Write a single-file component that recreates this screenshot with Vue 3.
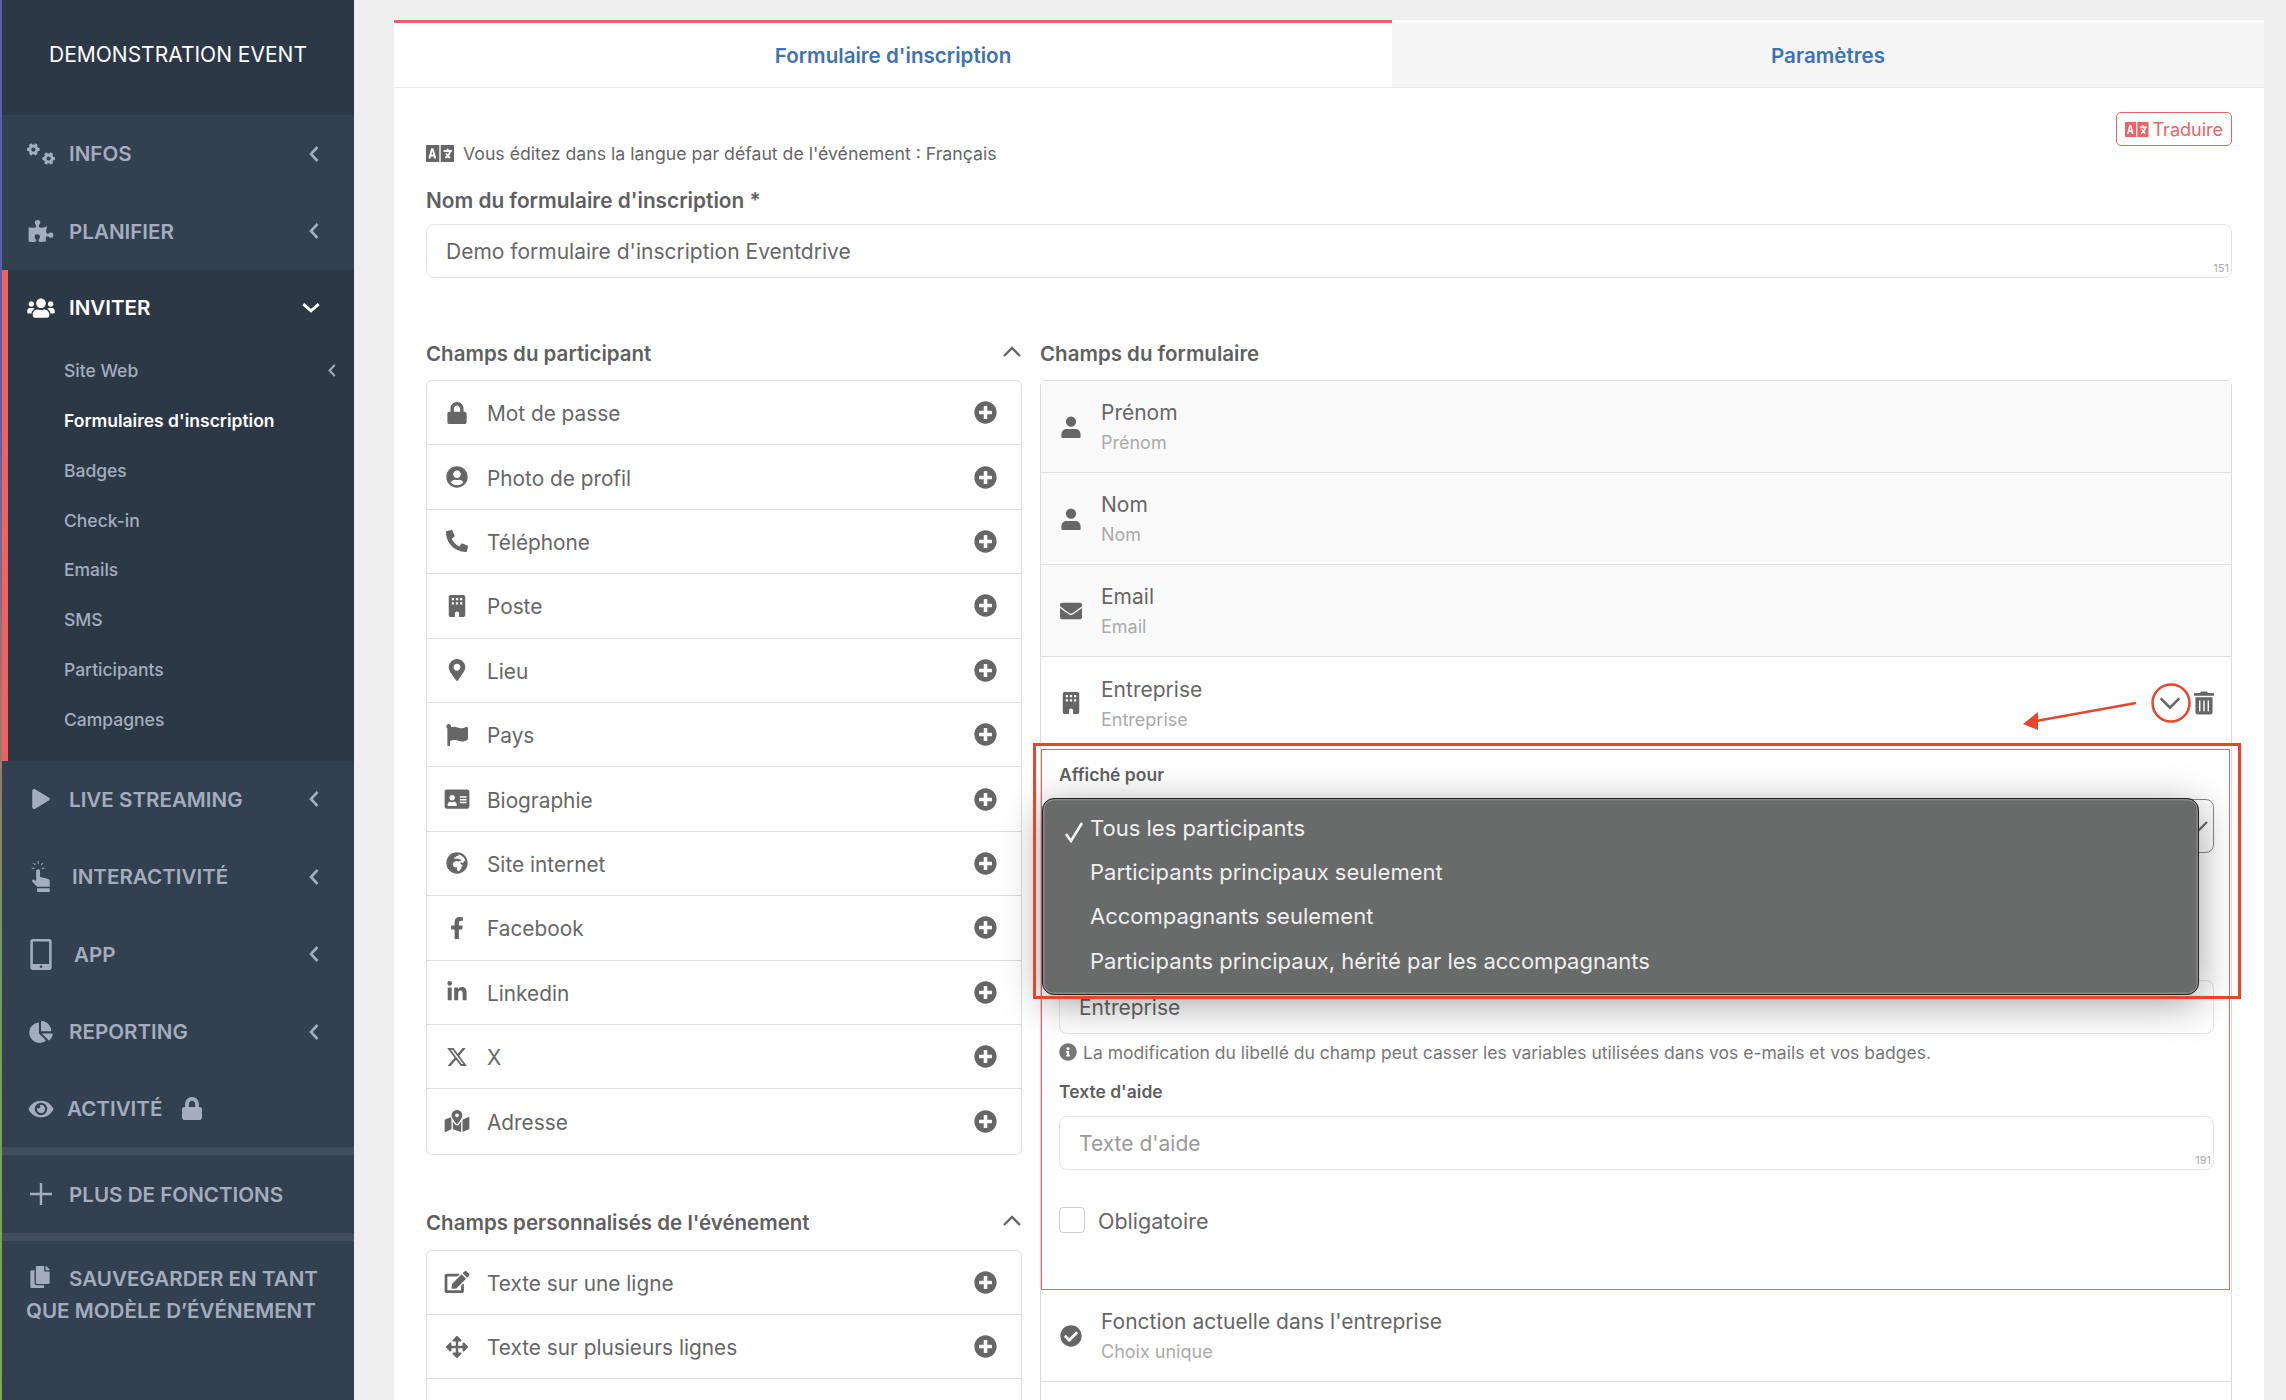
<script setup>
const gear = (x, y) => `M${x} ${y}l-8.2 14.3c-3 5.3-9.4 7.5-15.1 5.4-11.8-4.4-22.6-10.7-32.1-18.6-4.6-3.8-5.8-10.5-2.8-15.7l8.2-14.3c-6.9-8-12.3-17.3-15.9-27.4h-16.5c-6 0-11.2-4.3-12.2-10.3-2-12-2.1-24.6 0-37.1 1-6 6.2-10.4 12.2-10.4h16.5c3.6-10.1 9-19.4 15.9-27.4l-8.2-14.3c-3-5.2-1.9-11.9 2.8-15.7 9.5-7.9 20.4-14.2 32.1-18.6 5.7-2.1 12.1.1 15.1 5.4l8.2 14.3c10.5-1.9 21.2-1.9 31.7 0L${x + 39.9} ${y - 184.7}c3-5.3 9.4-7.5 15.1-5.4 11.8 4.4 22.6 10.7 32.1 18.6 4.6 3.8 5.8 10.5 2.8 15.7l-8.2 14.3c6.9 8 12.3 17.3 15.9 27.4h16.5c6 0 11.2 4.3 12.2 10.3 2 12 2.1 24.6 0 37.1-1 6-6.2 10.4-12.2 10.4h-16.5c-3.6 10.1-9 19.4-15.9 27.4l8.2 14.3c3 5.2 1.9 11.9-2.8 15.7-9.5 7.9-20.4 14.2-32.1 18.6-5.7 2.1-12.1-.1-15.1-5.4l-8.2-14.3c-10.4 1.9-21.2 1.9-31.7 0zm-10.5-58.8c38.5 29.6 82.4-14.3 52.8-52.8-38.5-29.7-82.4 14.3-52.8 52.8z`
const langPath = 'M152.1 236.2c-3.5-12.1-7.8-33.2-7.8-33.2h-.5s-4.3 21.1-7.8 33.2l-11.1 37.5H163zM616 96H336v320h280c13.3 0 24-10.7 24-24V120c0-13.3-10.7-24-24-24zm-24 120c0 6.6-5.4 12-12 12h-11.4c-6.9 23.6-21.7 47.4-42.7 69.9 8.4 6.4 17.1 12.5 26.1 18 5.5 3.4 7.3 10.5 4.1 16.2l-7.9 13.9c-3.4 5.9-10.9 7.8-16.7 4.3-12.6-7.8-24.5-16.1-35.4-24.9-10.9 8.7-22.7 17.1-35.4 24.9-5.8 3.5-13.3 1.6-16.7-4.3l-7.9-13.9c-3.2-5.6-1.4-12.8 4.2-16.2 9.3-5.7 18-11.7 26.1-18-7.9-8.4-14.9-17-21-25.7-4-5.7-2.2-13.6 3.7-17.1l6.5-3.9 7.3-4.3c5.4-3.2 12.4-1.7 16 3.4 5 7 10.8 14 17.4 20.9 13.5-14.2 23.8-28.9 30-43.2H412c-6.6 0-12-5.4-12-12v-16c0-6.6 5.4-12 12-12h64v-16c0-6.6 5.4-12 12-12h16c6.6 0 12 5.4 12 12v16h64c6.6 0 12 5.4 12 12zM0 120v272c0 13.3 10.7 24 24 24h280V96H24c-13.3 0-24 10.7-24 24zm58.9 216.1L116.4 167c1.7-4.9 6.2-8.1 11.4-8.1h32.5c5.1 0 9.7 3.3 11.4 8.1l57.5 169.1c2.6 7.8-3.1 15.9-11.4 15.9h-22.9a12 12 0 0 1-11.5-8.6l-9.4-31.9h-60.2l-9.1 31.8c-1.5 5.1-6.2 8.7-11.5 8.7H70.3c-8.2 0-14-8.1-11.4-15.9z'
const P = {
  lock: ['0 0 448 512', 'M400 224h-24v-72C376 68.2 307.8 0 224 0S72 68.2 72 152v72H48c-26.5 0-48 21.5-48 48v192c0 26.5 21.5 48 48 48h352c26.5 0 48-21.5 48-48V272c0-26.5-21.5-48-48-48zm-104 0H152v-72c0-39.7 32.3-72 72-72s72 32.3 72 72v72z'],
  userCircle: ['0 0 496 512', 'M248 8C111 8 0 119 0 256s111 248 248 248 248-111 248-248S385 8 248 8zm0 96c48.6 0 88 39.4 88 88s-39.4 88-88 88-88-39.4-88-88 39.4-88 88-88zm0 344c-58.7 0-111.3-26.6-146.5-68.2 18.8-35.4 55.6-59.8 98.5-59.8 2.4 0 4.8.4 7.1 1.1 13 4.2 26.6 6.9 40.9 6.9 14.3 0 28-2.7 40.9-6.9 2.3-.7 4.7-1.1 7.1-1.1 42.9 0 79.7 24.4 98.5 59.8C359.3 421.4 306.7 448 248 448z'],
  phone: ['0 0 512 512', 'M18.6 24.6l104-24c11.3-2.6 22.9 3.3 27.5 13.9l48 112c4.2 9.8 1.4 21.3-6.9 28l-60.6 49.6c36 76.7 98.9 140.5 177.2 177.2l49.6-60.6c6.8-8.3 18.2-11.1 28-6.9l112 48c10.7 4.7 16.6 16.3 14 27.6l-24 104C484.9 504.2 475.3 512 464 512 207.9 512 0 304.5 0 48c0-11.2 7.7-20.9 18.6-23.4z'],
  building: ['0 0 384 512', 'M48 0h288c26.5 0 48 21.5 48 48v416c0 26.5-21.5 48-48 48h-96v-80c0-26.5-21.5-48-48-48s-48 21.5-48 48v80H48c-26.5 0-48-21.5-48-48V48C0 21.5 21.5 0 48 0zM70 72h52v52H70zM166 72h52v52h-52zM262 72h52v52h-52zM70 168h52v52H70zM166 168h52v52h-52zM262 168h52v52h-52z'],
  marker: ['0 0 384 512', 'M172.268 501.67C26.97 291.031 0 260.74 0 192 0 85.961 85.961 0 192 0s192 85.961 192 192c0 68.74-26.97 99.031-172.268 309.67-9.535 13.774-29.93 13.773-39.464 0zM192 272c44.183 0 80-35.817 80-80s-35.817-80-80-80-80 35.817-80 80 35.817 80 80 80z'],
  flag: ['0 0 512 512', 'M349.565 98.783C295.978 98.783 251.721 64 184.348 64c-24.955 0-47.309 4.384-68.045 12.013a55.947 55.947 0 0 0 3.586-23.562C118.117 24.015 94.806 1.206 66.338.048 34.345-1.254 8 24.296 8 56c0 19.026 9.497 35.825 24 45.945V488c0 13.255 10.745 24 24 24h16c13.255 0 24-10.745 24-24v-94.4c28.311-12.064 63.582-22.122 114.435-22.122 53.588 0 97.844 34.783 165.217 34.783 48.169 0 86.667-16.294 122.505-40.858C506.84 359.452 512 349.571 512 339.045v-243.1c0-23.393-24.269-38.87-45.485-29.016-34.338 15.948-76.454 31.854-116.95 31.854z'],
  idCard: ['0 0 576 512', 'M48 32h480c26.5 0 48 21.5 48 48v352c0 26.5-21.5 48-48 48H48c-26.5 0-48-21.5-48-48V80c0-26.5 21.5-48 48-48zM352 200c0-4.4 3.6-8 8-8h144c4.4 0 8 3.6 8 8v16c0 4.4-3.6 8-8 8H360c-4.4 0-8-3.6-8-8v-16zm0 64c0-4.4 3.6-8 8-8h144c4.4 0 8 3.6 8 8v16c0 4.4-3.6 8-8 8H360c-4.4 0-8-3.6-8-8v-16zm0 64c0-4.4 3.6-8 8-8h144c4.4 0 8 3.6 8 8v16c0 4.4-3.6 8-8 8H360c-4.4 0-8-3.6-8-8v-16zM176 160c35.3 0 64 28.7 64 64s-28.7 64-64 64-64-28.7-64-64 28.7-64 64-64zM67.1 396.2C75.5 340.5 99.6 322 128 322h8.2c12.3 5.1 25.7 8 39.8 8s27.6-2.9 39.8-8h8.2c28.4 0 52.5 18.5 60.9 74.2 1.6 9.9-5.2 19.8-15.6 19.8H82.7c-10.4 0-17.2-10-15.6-19.8z'],
  globe: ['0 0 496 512', 'M248 8C111.03 8 0 119.03 0 256s111.03 248 248 248 248-111.03 248-248S384.97 8 248 8zm160 215.5v6.93c0 5.87-3.32 11.24-8.57 13.86l-15.39 7.7a15.485 15.485 0 0 1-15.53-.97l-18.21-12.14a15.52 15.52 0 0 0-13.5-1.81l-2.65.88c-9.7 3.23-13.66 14.79-7.99 23.3l13.24 19.86c2.87 4.31 7.71 6.9 12.89 6.9h8.21c8.56 0 15.5 6.94 15.5 15.5v11.34c0 3.35-1.09 6.62-3.1 9.3l-18.74 24.98c-1.42 1.9-2.39 4.1-2.83 6.43l-4.3 22.83c-.62 3.29-2.29 6.29-4.76 8.56a159.608 159.608 0 0 0-25 29.16l-13.03 19.55a27.756 27.756 0 0 1-23.09 12.36c-10.51 0-20.12-5.94-24.82-15.34a78.902 78.902 0 0 1-8.33-35.29V367.5c0-8.56-6.94-15.5-15.5-15.5h-25.88c-14.49 0-28.38-5.76-38.63-16a54.659 54.659 0 0 1-16-38.63v-14.06c0-17.19 8.1-33.38 21.85-43.7l27.58-20.69a54.663 54.663 0 0 1 32.78-10.93h.89c8.48 0 16.85 1.97 24.43 5.77l14.72 7.36c3.68 1.84 7.93 2.14 11.83.84l47.31-15.77c6.33-2.11 10.6-8.03 10.6-14.7 0-8.56-6.94-15.5-15.5-15.5h-10.09c-4.11 0-8.05-1.63-10.96-4.54l-6.92-6.92a15.493 15.493 0 0 0-10.96-4.54H199.5c-8.56 0-15.5-6.94-15.5-15.5v-4.4c0-7.11 4.84-13.31 11.74-15.04l14.45-3.61c3.74-.94 7-3.23 9.14-6.44l8.08-12.11c2.87-4.31 7.71-6.9 12.89-6.9h24.21c8.56 0 15.5-6.94 15.5-15.5v-21.7C359.23 71.63 422.86 131.02 441.93 208H423.5c-8.56 0-15.5 6.94-15.5 15.5z'],
  fb: ['0 0 320 512', 'M279.14 288l14.22-92.66h-88.91v-60.13c0-25.35 12.42-50.06 52.24-50.06h40.42V6.26S260.43 0 225.36 0c-73.22 0-121.08 44.38-121.08 124.72v70.62H22.89V288h81.39v224h100.17V288z'],
  li: ['0 0 448 512', 'M100.28 448H7.4V148.9h92.88zM53.79 108.1C24.09 108.1 0 83.5 0 53.8a53.79 53.79 0 0 1 107.58 0c0 29.7-24.1 54.3-53.79 54.3zM447.9 448h-92.68V302.4c0-34.7-.7-79.2-48.29-79.2-48.29 0-55.69 37.7-55.69 76.7V448h-92.78V148.9h89.08v40.8h1.3c12.4-23.5 42.69-48.3 87.88-48.3 94 0 111.28 61.9 111.28 142.3V448z'],
  x: ['0 0 512 512', 'M389.2 48h70.6L305.6 224.2 487 464H345L233.7 318.6 106.5 464H35.8L200.7 275.5 26.8 48H172.4L272.9 180.9 389.2 48zM364.4 421.8h39.1L151.1 88h-42L364.4 421.8z'],
  map: ['0 0 576 512', 'M288 0c-69.59 0-126 56.41-126 126 0 56.26 82.35 158.8 113.9 196.02 6.39 7.54 17.82 7.54 24.2 0C331.65 284.8 414 182.26 414 126 414 56.41 357.59 0 288 0zm0 168c-23.2 0-42-18.8-42-42s18.8-42 42-42 42 18.8 42 42-18.8 42-42 42zM20.12 215.95A32.006 32.006 0 0 0 0 245.66v250.32c0 11.32 11.43 19.06 21.94 14.86L160 448V214.92c-8.84-15.98-16.07-31.54-21.25-46.42L20.12 215.95zM288 359.67c-14.07 0-27.38-6.18-36.51-16.96-19.66-23.2-40.57-49.62-59.49-76.72V448l192 64V266c-18.92 27.09-39.82 53.52-59.49 76.72-9.13 10.77-22.44 16.95-36.51 16.95zm266.06-198.51L416 224v288l139.88-55.95A31.996 31.996 0 0 0 576 426.34V176.02c0-11.32-11.43-19.06-21.94-14.86z'],
  edit: ['0 0 576 512', 'M402.6 83.2l90.2 90.2c3.8 3.8 3.8 10 0 13.8L274.4 405.6l-92.8 10.3c-12.4 1.4-22.9-9.1-21.5-21.5l10.3-92.8L388.8 83.2c3.8-3.8 10-3.8 13.8 0zm162-22.9l-48.8-48.8c-15.2-15.2-39.9-15.2-55.2 0l-35.4 35.4c-3.8 3.8-3.8 10 0 13.8l90.2 90.2c3.8 3.8 10 3.8 13.8 0l35.4-35.4c15.2-15.3 15.2-40 0-55.2zM384 346.2V448H64V128h229.8c3.2 0 6.2-1.3 8.5-3.5l40-40c7.6-7.6 2.2-20.5-8.5-20.5H48C21.5 64 0 85.5 0 112v352c0 26.5 21.5 48 48 48h352c26.5 0 48-21.5 48-48V306.2c0-10.7-12.9-16-20.5-8.5l-40 40c-2.2 2.3-3.5 5.3-3.5 8.5z'],
  arrows: ['0 0 512 512', 'M352.201 425.775l-79.196 79.196c-9.373 9.373-24.568 9.373-33.941 0l-79.196-79.196c-15.119-15.119-4.411-40.971 16.971-40.97h51.162L228 284H127.196v51.162c0 21.382-25.851 32.09-40.971 16.971L7.029 272.937c-9.373-9.373-9.373-24.569 0-33.941L86.225 159.8c15.119-15.119 40.971-4.411 40.971 16.971V228H228V127.196h-51.23c-21.382 0-32.09-25.851-16.971-40.971l79.196-79.196c9.373-9.373 24.568-9.373 33.941 0l79.196 79.196c15.119 15.119 4.411 40.971-16.971 40.971h-51.162V228h100.804v-51.162c0-21.382 25.851-32.09 40.97-16.971l79.196 79.196c9.373 9.373 9.373 24.569 0 33.941L425.773 352.2c-15.119 15.119-40.971 4.411-40.97-16.971V284H284v100.804h51.23c21.382 0 32.09 25.851 16.971 40.971z'],
  plus: ['0 0 512 512', 'M256 8C119 8 8 119 8 256s111 248 248 248 248-111 248-248S393 8 256 8zm144 276c0 6.6-5.4 12-12 12h-92v92c0 6.6-5.4 12-12 12h-56c-6.6 0-12-5.4-12-12v-92h-92c-6.6 0-12-5.4-12-12v-56c0-6.6 5.4-12 12-12h92v-92c0-6.6 5.4-12 12-12h56c6.6 0 12 5.4 12 12v92h92c6.6 0 12 5.4 12 12v56z'],
  user: ['0 0 448 512', 'M224 10a120 120 0 1 1 0 240a120 120 0 1 1 0-240zM110 300h228c60 0 110 60 110 130v60c0 12-10 22-22 22H22c-12 0-22-10-22-22v-60c0-70 50-130 110-130z'],
  envelope: ['0 0 512 512', 'M502.3 190.8c3.9-3.1 9.7-.2 9.7 4.7V400c0 26.5-21.5 48-48 48H48c-26.5 0-48-21.5-48-48V195.6c0-5 5.7-7.8 9.7-4.7 22.4 17.4 52.1 39.5 154.1 113.6 21.1 15.4 56.7 47.8 92.2 47.6 35.7.3 72-32.8 92.3-47.6 102-74.1 131.6-96.3 154-113.7zM256 320c23.2.4 56.6-29.2 73.4-41.4 132.7-96.3 142.8-104.7 173.4-128.7 5.8-4.5 9.2-11.5 9.2-18.9v-19c0-26.5-21.5-48-48-48H48C21.5 64 0 85.5 0 112v19c0 7.4 3.4 14.3 9.2 18.9 30.6 23.9 40.7 32.4 173.4 128.7 16.8 12.2 50.2 41.8 73.4 41.4z'],
  check: ['0 0 512 512', 'M504 256c0 136.967-111.033 248-248 248S8 392.967 8 256 119.033 8 256 8s248 111.033 248 248zM227.314 387.314l184-184c6.248-6.248 6.248-16.379 0-22.627l-22.627-22.627c-6.248-6.249-16.379-6.249-22.628 0L216 308.118l-70.059-70.059c-6.248-6.248-16.379-6.248-22.628 0l-22.627 22.627c-6.248 6.248-6.248 16.379 0 22.627l104 104c6.249 6.249 16.379 6.249 22.628.001z'],
  info: ['0 0 512 512', 'M256 8C119.043 8 8 119.083 8 256c0 136.997 111.043 248 248 248s248-111.003 248-248C504 119.083 392.957 8 256 8zm0 110c23.196 0 42 18.804 42 42s-18.804 42-42 42-42-18.804-42-42 18.804-42 42-42zm56 254c0 6.627-5.373 12-12 12h-88c-6.627 0-12-5.373-12-12v-24c0-6.627 5.373-12 12-12h12v-64h-12c-6.627 0-12-5.373-12-12v-24c0-6.627 5.373-12 12-12h64c6.627 0 12 5.373 12 12v100h12c6.627 0 12 5.373 12 12v24z'],
  trash: ['0 0 448 512', 'M32 464a48 48 0 0 0 48 48h288a48 48 0 0 0 48-48V128H32zm272-256a16 16 0 0 1 32 0v224a16 16 0 0 1-32 0zm-96 0a16 16 0 0 1 32 0v224a16 16 0 0 1-32 0zm-96 0a16 16 0 0 1 32 0v224a16 16 0 0 1-32 0zM432 32H312l-9.4-18.7A24 24 0 0 0 281.1 0H166.8a23.72 23.72 0 0 0-21.4 13.3L136 32H16A16 16 0 0 0 0 48v32a16 16 0 0 0 16 16h416a16 16 0 0 0 16-16V48a16 16 0 0 0-16-16z'],
  language: ['0 96 640 320', langPath],
  cogs: ['0 0 494 372', gear(96.1, 191) + gear(366.1, 351)],
  puzzle: ['0 0 576 512', 'M519.442 288.651c-41.519 0-59.5 31.593-82.058 31.593C377.409 320.244 432 144 432 144s-196.288 80-196.288-3.297c0-35.827 36.288-46.25 36.288-85.985C272 19.216 243.885 0 210.539 0c-34.654 0-66.366 18.891-66.366 56.346 0 41.364 31.711 59.277 31.711 81.75C175.885 207.719 0 166.758 0 166.758v333.237s178.635 41.047 178.635-28.662c0-22.473-40-40.107-40-81.471 0-37.456 29.25-56.346 63.577-56.346 33.673 0 61.788 19.216 61.788 54.717 0 39.735-36.288 50.158-36.288 85.985 0 60.803 129.675 25.73 181.23 25.73 0 0-34.725-120.101 25.827-120.101 35.962 0 46.423 36.152 86.308 36.152C556.712 416 576 387.99 576 354.443c0-34.199-18.962-65.792-56.558-65.792z'],
  users: ['0 0 640 512', 'M96 224c35.3 0 64-28.7 64-64s-28.7-64-64-64-64 28.7-64 64 28.7 64 64 64zm448 0c35.3 0 64-28.7 64-64s-28.7-64-64-64-64 28.7-64 64 28.7 64 64 64zm32 32h-64c-17.6 0-33.5 7.1-45.1 18.6 40.3 22.1 68.9 62 75.1 109.4h66c17.7 0 32-14.3 32-32v-32c0-35.3-28.7-64-64-64zm-256 0c61.9 0 112-50.1 112-112S381.9 32 320 32 208 82.1 208 144s50.1 112 112 112zm76.8 32h-8.3c-20.8 10-43.9 16-68.5 16s-47.6-6-68.5-16h-8.3C179.6 288 128 339.6 128 403.2V432c0 26.5 21.5 48 48 48h288c26.5 0 48-21.5 48-48v-28.8c0-63.6-51.6-115.2-115.2-115.2zm-223.7-13.4C161.5 263.1 145.6 256 128 256H64c-35.3 0-64 28.7-64 64v32c0 17.7 14.3 32 32 32h65.9c6.3-47.4 34.9-87.3 75.2-109.4z'],
  play: ['0 0 448 512', 'M424.4 214.7L72.4 6.6C43.8-10.3 0 6.1 0 47.9V464c0 37.5 40.7 60.1 72.4 41.3l352-208c31.4-18.5 31.5-64.1 0-82.6z'],
  hand: ['0 0 20 32', 'M6.6 0h.9v3h-.9zM1.8 2.4l.7-.7 1.9 1.9-.7.7zM11.6 1.7l.7.7-1.9 1.9-.7-.7zM.5 7h2.8v.9H.5zM10.8 7h2.8v.9h-2.8zM5 10.5c0-1.3.8-2.1 2-2.1s2 .8 2 2.1v6l7.2 1.6c1.7.4 2.8 1.4 2.8 3.1v5.3H6L1.2 21.4c-1.1-1.2.5-2.9 1.9-1.9L5 21zM6 28h13v4H6z'],
  tablet: ['0 0 352 512', 'M40 0h272c22 0 40 18 40 40v432c0 22-18 40-40 40H40c-22 0-40-18-40-40V40C0 18 18 0 40 0zM176 478c-12 0-22-9-22-20s10-20 22-20 22 9 22 20-10 20-22 20zM310 412V40H42v372z'],
  pie: ['0 0 544 512', 'M527.79 288H290.5l158.03 158.03c6.04 6.04 15.98 6.53 22.19.68 38.7-36.46 65.32-85.61 73.13-140.86 1.34-9.46-6.51-17.85-16.06-17.85zm-15.83-64.8C503.72 103.74 408.26 8.28 288.8.04 279.68-.59 272 7.1 272 16.24V240h223.77c9.14 0 16.82-7.68 16.19-16.8zM224 288V50.71c0-9.55-8.39-17.4-17.84-16.06C86.99 51.49-4.1 155.6.14 280.37 4.5 408.51 114.83 513.59 243.03 511.98c50.4-.63 96.97-16.87 135.26-44.03 7.9-5.6 8.42-17.23 1.57-24.08L224 288z'],
  eye: ['0 0 576 512', 'M572.52 241.4C518.29 135.59 410.93 64 288 64S57.68 135.64 3.48 241.41a32.35 32.35 0 0 0 0 29.19C57.71 376.41 165.07 448 288 448s230.32-71.64 284.52-177.41a32.35 32.35 0 0 0 0-29.19zM288 400a144 144 0 1 1 144-144 143.93 143.93 0 0 1-144 144zm0-240a95.31 95.31 0 0 0-25.31 3.79 47.85 47.85 0 0 1-66.9 66.9A95.78 95.78 0 1 0 288 160z'],
  copy: ['0 0 448 512', 'M320 448v40c0 13.255-10.745 24-24 24H24c-13.255 0-24-10.745-24-24V120c0-13.255 10.745-24 24-24h72v296c0 30.879 25.121 56 56 56h168zm0-344V0H152c-13.255 0-24 10.745-24 24v368c0 13.255 10.745 24 24 24h272c13.255 0 24-10.745 24-24V128H344c-13.2 0-24-10.8-24-24zm120.971-31.029L375.029 7.029A24 24 0 0 0 358.059 0H352v96h96v-6.059a24 24 0 0 0-7.029-16.97z'],
}

const navTop = [
  { label: 'INFOS', icon: 'cogs' },
  { label: 'PLANIFIER', icon: 'puzzle' },
]
const subItems = ['Site Web', "Formulaires d'inscription", 'Badges', 'Check-in', 'Emails', 'SMS', 'Participants', 'Campagnes']
const navBottom = [
  { label: 'LIVE STREAMING', icon: 'play', cls: 'small' },
  { label: 'INTERACTIVITÉ', icon: 'hand', cls: 'tall shift3' },
  { label: 'APP', icon: 'tablet', cls: 'tall shift5' },
  { label: 'REPORTING', icon: 'pie', cls: '' },
]
const participantFields = [
  ['Mot de passe', 'lock'], ['Photo de profil', 'userCircle'], ['Téléphone', 'phone'], ['Poste', 'building'],
  ['Lieu', 'marker'], ['Pays', 'flag'], ['Biographie', 'idCard'], ['Site internet', 'globe'],
  ['Facebook', 'fb'], ['Linkedin', 'li'], ['X', 'x'], ['Adresse', 'map'],
]
const customFields = [['Texte sur une ligne', 'edit'], ['Texte sur plusieurs lignes', 'arrows']]
const lockedFields = [['Prénom', 'Prénom', 'user'], ['Nom', 'Nom', 'user'], ['Email', 'Email', 'envelope']]
const options = ['Tous les participants', 'Participants principaux seulement', 'Accompagnants seulement', 'Participants principaux, hérité par les accompagnants']
</script>

<template>
  <div class="page">
    <aside class="sidebar">
      <div class="brand">DEMONSTRATION EVENT</div>
      <div v-for="n in navTop" :key="n.label" class="nav-item">
        <span class="nav-ico"><svg :viewBox="P[n.icon][0]"><path :d="P[n.icon][1]" fill-rule="evenodd" /></svg></span>
        <span class="nav-label">{{ n.label }}</span>
        <svg class="chev-left" viewBox="0 0 10 18"><path d="M8.5 2 2 9l6.5 7" /></svg>
      </div>

      <div class="active-group">
        <div class="nav-item active">
          <span class="nav-ico"><svg :viewBox="P.users[0]"><path :d="P.users[1]" /></svg></span>
          <span class="nav-label">INVITER</span>
          <svg class="chev-down" viewBox="0 0 18 10"><path d="M2 2l7 6 7-6" /></svg>
        </div>
        <div v-for="(s, i) in subItems" :key="s" class="sub-item" :class="{ current: i === 1 }">
          {{ s }}
          <svg v-if="i === 0" class="chev-left sub-chev" viewBox="0 0 10 18"><path d="M8.5 2 2 9l6.5 7" /></svg>
        </div>
      </div>

      <div v-for="n in navBottom" :key="n.label" class="nav-item" :class="n.cls">
        <span class="nav-ico"><svg :viewBox="P[n.icon][0]"><path :d="P[n.icon][1]" fill-rule="evenodd" /></svg></span>
        <span class="nav-label">{{ n.label }}</span>
        <svg class="chev-left" viewBox="0 0 10 18"><path d="M8.5 2 2 9l6.5 7" /></svg>
      </div>
      <div class="nav-item activity">
        <span class="nav-ico"><svg :viewBox="P.eye[0]"><path :d="P.eye[1]" /></svg></span>
        <span class="nav-label">ACTIVITÉ</span>
        <svg class="activity-lock" :viewBox="P.lock[0]"><path :d="P.lock[1]" /></svg>
      </div>
      <div class="nav-sep"></div>
      <div class="nav-item">
        <span class="nav-ico"><svg class="plus-sign" viewBox="0 0 18 18"><path d="M8 0h2v8h8v2h-8v8H8v-8H0V8h8z" /></svg></span>
        <span class="nav-label">PLUS DE FONCTIONS</span>
      </div>
      <div class="nav-sep"></div>
      <div class="save-tpl">
        <svg :viewBox="P.copy[0]"><path :d="P.copy[1]" /></svg>SAUVEGARDER EN TANT QUE MODÈLE D’ÉVÉNEMENT
      </div>
    </aside>

    <main class="main">
      <div class="tabs">
        <div class="tab tab-on">Formulaire d'inscription</div>
        <div class="tab tab-off">Paramètres</div>
      </div>

      <div class="content">
        <div class="lang-row">
          <div class="lang-note">
            <svg :viewBox="P.language[0]" preserveAspectRatio="none"><path :d="P.language[1]" /></svg>
            <span>Vous éditez dans la langue par défaut de l'événement : Français</span>
          </div>
          <button class="translate">
            <svg :viewBox="P.language[0]" preserveAspectRatio="none"><path :d="P.language[1]" /></svg>Traduire
          </button>
        </div>

        <div class="label-main">Nom du formulaire d'inscription *</div>
        <div class="input name-input">Demo formulaire d'inscription Eventdrive<span class="count">151</span></div>

        <div class="columns">
          <section class="col-left">
            <div class="col-title">Champs du participant
              <svg class="chev-up" viewBox="0 0 20 12"><path d="M2 10l8-8 8 8" /></svg>
            </div>
            <div class="list">
              <div v-for="f in participantFields" :key="f[0]" class="add-row">
                <span class="f-ico"><svg :viewBox="P[f[1]][0]"><path :d="P[f[1]][1]" fill-rule="evenodd" /></svg></span>
                <span class="f-name">{{ f[0] }}</span>
                <svg class="add" :viewBox="P.plus[0]"><path :d="P.plus[1]" /></svg>
              </div>
            </div>

            <div class="col-title second">Champs personnalisés de l'événement
              <svg class="chev-up" viewBox="0 0 20 12"><path d="M2 10l8-8 8 8" /></svg>
            </div>
            <div class="list">
              <div v-for="f in customFields" :key="f[0]" class="add-row">
                <span class="f-ico"><svg :viewBox="P[f[1]][0]"><path :d="P[f[1]][1]" /></svg></span>
                <span class="f-name">{{ f[0] }}</span>
                <svg class="add" :viewBox="P.plus[0]"><path :d="P.plus[1]" /></svg>
              </div>
              <div class="add-row"></div>
            </div>
          </section>

          <section class="col-right">
            <div class="col-title">Champs du formulaire</div>
            <div class="list form-list">
              <div v-for="f in lockedFields" :key="f[0]" class="form-row locked">
                <span class="f-ico"><svg :viewBox="P[f[2]][0]"><path :d="P[f[2]][1]" /></svg></span>
                <div class="f-text"><div class="f-name">{{ f[0] }}</div><div class="f-sub">{{ f[1] }}</div></div>
              </div>

              <div class="form-row open">
                <span class="f-ico"><svg :viewBox="P.building[0]"><path :d="P.building[1]" fill-rule="evenodd" /></svg></span>
                <div class="f-text"><div class="f-name">Entreprise</div><div class="f-sub">Entreprise</div></div>
                <div class="row-actions">
                  <svg class="act-chev" viewBox="0 0 20 12"><path d="M2 2l8 8 8-8" /></svg>
                  <svg class="act-trash" :viewBox="P.trash[0]"><path :d="P.trash[1]" /></svg>
                </div>
              </div>

              <div class="editor">
                <div class="label-small first">Affiché pour</div>
                <div class="select">
                  <svg viewBox="0 0 20 12"><path d="M2 2l8 8 8-8" /></svg>
                </div>
                <div class="input edit-input">Entreprise</div>
                <div class="hint">
                  <svg :viewBox="P.info[0]"><path :d="P.info[1]" /></svg>
                  La modification du libellé du champ peut casser les variables utilisées dans vos e-mails et vos badges.
                </div>
                <div class="label-small">Texte d'aide</div>
                <div class="input edit-input placeholder">Texte d'aide<span class="count">191</span></div>
                <div class="required"><span class="checkbox"></span><span class="req-text">Obligatoire</span></div>

                <div class="native-menu">
                  <div v-for="(o, i) in options" :key="o" class="opt">
                    <svg v-if="i === 0" class="tick" viewBox="0 0 20 24"><path d="M2 14l5 7L18 3" /></svg>
                    {{ o }}
                  </div>
                </div>
              </div>

              <div class="form-row">
                <span class="f-ico"><svg :viewBox="P.check[0]"><path :d="P.check[1]" /></svg></span>
                <div class="f-text"><div class="f-name">Fonction actuelle dans l'entreprise</div><div class="f-sub">Choix unique</div></div>
              </div>
              <div class="form-row"></div>
            </div>
          </section>
        </div>
      </div>
    </main>

    <div class="mark-box"></div>
    <svg class="mark-arrow" viewBox="0 0 2286 1400">
      <circle cx="2171" cy="703" r="18.5" />
      <line x1="2136" y1="703" x2="2036" y2="721" />
      <polygon points="2023,724 2038,712 2038,730" />
    </svg>
  </div>
</template>

<style>
body { margin: 0; background: #eeeeee; }
</style>

<style scoped>
.page {
  position: relative;
  display: flex;
  width: 2286px;
  height: 1400px;
  overflow: hidden;
  background: #eeeeee;
  font-family: Inter, "Noto Sans", sans-serif;
  color: #666;
}
/* sidebar */
.sidebar {
  flex: none;
  width: 352px;
  height: 1400px;
  border-left: 2px solid;
  border-image: linear-gradient(180deg, #5a60a8 0%, #5a60a8 30%, #a8706a 50%, #6f9d62 70%, #7aad55 100%) 1;
  background: #334050;
  font-family: Inter, "Noto Sans", sans-serif;
  color: #a3adbd;
}
.brand {
  height: 115px;
  background: #2d3847;
  color: #fff;
  font-size: 21px;
  font-weight: 400;
  line-height: 110px;
  text-align: center;
}
.nav-item {
  position: relative;
  display: flex;
  align-items: center;
  height: 77.4px;
  padding-left: 24px;
  font-size: 20.6px;
  font-weight: 600;
}
.nav-ico {
  display: flex;
  justify-content: center;
  align-items: center;
  flex: none;
  width: 30px;
  margin-right: 13px;
}
.nav-ico svg { width: 28px; height: 22px; fill: #a3adbd; }
.tall .nav-ico svg { height: 31px; }
.small .nav-ico svg { height: 20px; }
.shift3 .nav-label { margin-left: 3px; }
.shift5 .nav-label { margin-left: 5px; }
.chev-left {
  position: absolute;
  right: 35px;
  width: 10px;
  height: 18px;
  fill: none;
  stroke: #a3adbd;
  stroke-width: 2.6;
}
.active-group {
  height: 491px;
  background: #2d3847;
  border-left: 6px solid #ec6363;
  box-sizing: border-box;
}
.active-group .nav-item { height: 76px; padding-left: 18px; color: #fff; }
.active-group .nav-ico svg { fill: #fff; }
.chev-down {
  position: absolute;
  right: 33px;
  width: 20px;
  height: 11px;
  fill: none;
  stroke: #fff;
  stroke-width: 2.6;
}
.sub-item {
  position: relative;
  display: flex;
  align-items: center;
  height: 49.8px;
  padding-left: 56px;
  font-size: 17.5px;
  font-weight: 500;
  color: #a3adbd;
}
.sub-item.current { color: #fff; font-weight: 600; }
.sub-chev { right: 18px; width: 8px; height: 15px; }
.activity .nav-ico { margin-right: 11px; }
.activity { height: 77px; }
.activity-lock { width: 20px; height: 23px; margin-left: 20px; fill: #a3adbd; }
.nav-sep { height: 8px; background: #424e5e; }
.save-tpl {
  padding: 22px 0 0 24px;
  font-size: 20.6px;
  font-weight: 600;
  line-height: 32px;
}
.save-tpl svg { width: 20px; height: 22px; margin: 0 19px 0 4px; fill: #a3adbd; vertical-align: -2px; }

/* main */
.main {
  flex: none;
  width: 1870px;
  height: 1380px;
  margin: 20px 0 0 40px;
  background: #fff;
}
.tabs { display: flex; height: 68px; font-size: 20.6px; font-weight: 600; color: #3f72af; }
.tab { display: flex; align-items: center; justify-content: center; box-sizing: border-box; padding-top: 1px; }
.tab-on { width: 998px; border-top: 3px solid #ec6363; border-bottom: 1px solid #eaeaea; background: #fff; }
.tab-off { flex: 1; margin-top: 3px; background: #f5f5f5; border-bottom: 1px solid #e8e8e8; }
.content { padding: 24px 32px 0; }
.lang-row { display: flex; justify-content: space-between; height: 54px; }
.lang-note { display: flex; align-items: center; gap: 9px; height: 24px; margin-top: 29px; font-size: 17.7px; }
.lang-note svg { width: 28px; height: 17px; fill: #666; }
.translate {
  display: flex;
  align-items: center;
  gap: 4px;
  box-sizing: border-box;
  width: 116px;
  height: 34px;
  padding: 0 8px;
  border: 1px solid #ec6363;
  border-radius: 5px;
  background: #fff;
  color: #ec6363;
  font: 400 18px Inter, sans-serif;
}
.translate svg { width: 24px; height: 15px; fill: #ec6363; }
.label-main { height: 30px; margin-top: 20px; font-size: 20.8px; font-weight: 600; line-height: 30px; color: #5f5f5f; }
.input {
  position: relative;
  box-sizing: border-box;
  display: flex;
  align-items: center;
  height: 54px;
  padding: 1px 0 0 19px;
  border: 1px solid #e4e4e4;
  border-radius: 8px;
  font-size: 21px;
}
.name-input { margin-top: 8px; }
.count { position: absolute; right: 2px; bottom: 2px; font-size: 11px; color: #aaa; }
.columns { display: grid; grid-template-columns: 596px 1192px; column-gap: 18px; margin-top: 61px; }
.col-title {
  position: relative;
  height: 30px;
  margin-bottom: 11px;
  font-size: 20.5px;
  font-weight: 600;
  line-height: 30px;
  color: #5f5f5f;
}
.col-title.second { margin: 53px 0 12px; }
.chev-up { position: absolute; right: 0; top: 7px; width: 20px; height: 12px; fill: none; stroke: #666; stroke-width: 2.4; }
.list { border: 1px solid #dcdcdc; border-radius: 6px; box-sizing: border-box; }
.add-row {
  display: flex;
  align-items: center;
  box-sizing: border-box;
  height: 64.4px;
  padding: 0 24px 0 17px;
  border-bottom: 1px solid #dedede;
}
.add-row:last-child { border-bottom: 0; }
.add-row .f-name { padding-top: 2px; font-size: 20.8px; }
.f-ico { display: flex; justify-content: center; flex: none; width: 26px; margin-right: 17px; }
.f-ico svg { width: 26px; height: 22px; fill: #666; }
.f-name { flex: 1; font-size: 21px; color: #666; }
.add { width: 23px; height: 23px; fill: #666; }
.form-list { border-radius: 6px 6px 0 0; }
.form-row {
  display: flex;
  align-items: center;
  box-sizing: border-box;
  height: 92px;
  padding: 0 17px;
  border-bottom: 1px solid #dedede;
}
.form-row.locked { background: #f9f9f9; }
.form-row.open { border-bottom: 0; }
.f-text { flex: 1; padding-top: 3px; }
.f-text .f-name { line-height: 30px; }
.f-sub { font-size: 18px; line-height: 30px; color: #aaa; }
.row-actions { display: flex; align-items: center; gap: 12px; }
.act-chev { width: 24px; height: 14px; fill: none; stroke: #666; stroke-width: 2.2; }
.act-trash { width: 20px; height: 24px; fill: #666; }
.editor {
  position: relative;
  box-sizing: border-box;
  height: 541px;
  padding: 0 15px 0 17px;
  border: 1px solid #f06060;
  margin-right: 1px;
}
.label-small { height: 24px; font-size: 17.5px; font-weight: 600; line-height: 24px; color: #5f5f5f; }
.label-small.first { margin-top: 13px; }
.select {
  position: relative;
  box-sizing: border-box;
  height: 54px;
  margin-top: 12px;
  margin-bottom: 127px;
  border: 1px solid #888;
  border-radius: 8px;
}
.select svg { position: absolute; right: 4px; top: 20px; width: 20px; height: 12px; fill: none; stroke: #666; stroke-width: 2; }
.hint { display: flex; align-items: center; gap: 6px; height: 36px; font-size: 17.5px; color: #777; }
.hint svg { width: 18px; height: 18px; fill: #777; }
.label-small:not(.first) { margin: 10px 0 12px; }
.placeholder { color: #999; }
.required { display: flex; align-items: center; gap: 13px; margin-top: 35px; font-size: 21.5px; }
.req-text { padding-top: 3px; }
.checkbox { width: 26px; height: 26px; border: 1px solid #ccc; border-radius: 4px; box-sizing: border-box; }
.native-menu {
  position: absolute;
  left: 0;
  top: 48px;
  box-sizing: border-box;
  width: 1157px;
  height: 197px;
  padding: 7px 0 0 47px;
  border: 1px solid #222;
  border-radius: 12px;
  background: #696a6a;
  box-shadow: inset 0 0 0 1.5px #888, 0 8px 40px rgba(0, 0, 0, .38);
  color: #f0f0f0;
  font-size: 22px;
}
.opt { position: relative; height: 44.2px; line-height: 44px; }
.tick { position: absolute; left: -26px; top: 14px; width: 20px; height: 24px; fill: none; stroke: #f4f4f4; stroke-width: 2.6; }

/* annotations */
.mark-box {
  position: absolute;
  left: 1033px;
  top: 743px;
  box-sizing: border-box;
  width: 1208px;
  height: 256px;
  border: 3px solid #e8462c;
  pointer-events: none;
}
.mark-arrow { position: absolute; left: 0; top: 0; width: 2286px; height: 1400px; pointer-events: none; }
.mark-arrow circle { fill: none; stroke: #e8462c; stroke-width: 2.5; }
.mark-arrow line { stroke: #e8462c; stroke-width: 2.5; }
.mark-arrow polygon { fill: #e8462c; }
</style>
